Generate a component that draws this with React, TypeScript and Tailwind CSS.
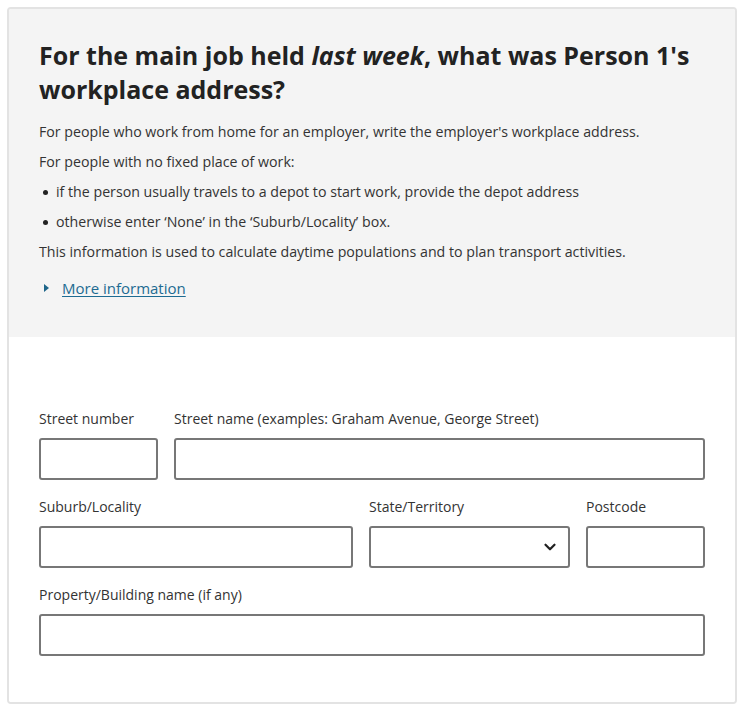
import { ChevronDown } from "lucide-react";

function Field({ label, className, select }: { label: string; className: string; select?: boolean }) {
  return (
    <div className={`flex flex-col ${className}`}>
      <label className="text-[14px] leading-[20px] mb-[9px] text-[#333]">{label}</label>
      {select ? (
        <div className="h-[42px] border-2 border-[#777] rounded-[3px] bg-white flex items-center justify-end pr-[9px]">
          <ChevronDown className="w-[18px] h-[18px] text-[#222]" strokeWidth={3} />
        </div>
      ) : (
        <input className="h-[42px] w-full border-2 border-[#777] rounded-[3px] bg-white outline-none" />
      )}
    </div>
  );
}

export default function App() {
  return (
    <div className="bg-white p-[7px] h-[712px]" style={{ fontFamily: '"Open Sans", sans-serif' }}>
      <div className="border-2 border-[#e3e3e3] rounded-[4px] overflow-hidden text-[#333]">
        <div className="bg-[#f4f4f4] px-[30px] pt-[29px] pb-[34px]">
          <h1 className="text-[25px] leading-[34px] font-bold text-[#222] mb-[11px]">
            For the main job held <em>last week</em>, what was Person 1's workplace address?
          </h1>
          <div className="text-[14.2px] leading-[30px]">
            <p>For people who work from home for an employer, write the employer's workplace address.</p>
            <p>For people with no fixed place of work:</p>
            <ul>
              <li className="flex items-center gap-[8px] pl-[4px]">
                <span className="w-[5px] h-[5px] rounded-full bg-[#222]" />
                if the person usually travels to a depot to start work, provide the depot address
              </li>
              <li className="flex items-center gap-[8px] pl-[4px]">
                <span className="w-[5px] h-[5px] rounded-full bg-[#222]" />
                otherwise enter ‘None’ in the ‘Suburb/Locality’ box.
              </li>
            </ul>
            <p>This information is used to calculate daytime populations and to plan transport activities.</p>
            <div className="flex items-center gap-[12px] mt-[6px] pl-[5px]">
              <svg width="6" height="8" viewBox="0 0 6 8" className="text-[#1d6589]">
                <path d="M0 0 L5 4 L0 8 Z" fill="currentColor" />
              </svg>
              <a href="#" className="text-[15px] text-[#1d6b92] underline underline-offset-2">More information</a>
            </div>
          </div>
        </div>
        <div className="bg-white px-[30px] pt-[72px] pb-[46px] flex flex-col gap-[17px]">
          <div className="flex gap-[16px]">
            <Field label="Street number" className="w-[119px]" />
            <Field label="Street name (examples: Graham Avenue, George Street)" className="flex-1" />
          </div>
          <div className="flex gap-[16px]">
            <Field label="Suburb/Locality" className="flex-1" />
            <Field label="State/Territory" className="w-[201px]" select />
            <Field label="Postcode" className="w-[119px]" />
          </div>
          <Field label="Property/Building name (if any)" className="w-full" />
        </div>
      </div>
    </div>
  );
}
